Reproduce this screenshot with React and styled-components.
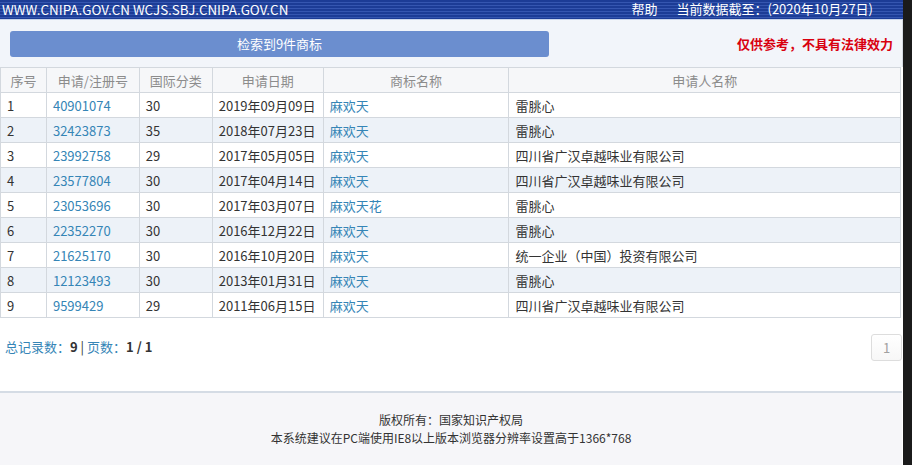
import React from "react";
import styled, { createGlobalStyle } from "styled-components";

const GlobalStyle = createGlobalStyle`
  html, body { margin: 0; padding: 0; background: #1b1b1b; }
  body { font-family: "Noto Sans CJK SC", "Noto Sans", sans-serif; }
  * { box-sizing: border-box; }
`;

const Shell = styled.div`
  display: flex;
  width: 912px;
  height: 465px;
  overflow: hidden;
`;

const Page = styled.div`
  width: 903px;
  height: 465px;
  display: flex;
  flex-direction: column;
  background: #ffffff;
`;

const TopBar = styled.div`
  height: 20px;
  display: flex;
  align-items: flex-start;
  justify-content: space-between;
  padding: 0 30px 0 2px;
  color: #ffffff;
  line-height: 18px;
  background: repeating-linear-gradient(
    to bottom,
    #1c3c96 0px,
    #1c3c96 2px,
    #3556b0 2px,
    #3556b0 3px
  );
  border-bottom: 1px solid #c9d4ea;
`;

const Domain = styled.span`
  font-size: 13.4px;
`;

const TopLinks = styled.div`
  display: flex;
  gap: 19px;
  font-size: 13px;
`;

const SearchPanel = styled.div`
  display: flex;
  align-items: center;
  justify-content: space-between;
  height: 47px;
  padding: 0 9px 0 10px;
  background: #f2f5fa;
  border-right: 1px solid #d6dbe3;
`;

const ResultBar = styled.div`
  width: 539px;
  height: 26px;
  border-radius: 3px;
  background: #6b8ecf;
  color: #ffffff;
  font-size: 13px;
  display: flex;
  align-items: center;
  justify-content: center;
`;

const Notice = styled.div`
  color: #d9000f;
  font-size: 13px;
  font-weight: bold;
`;

const Table = styled.table`
  width: 901px;
  border-collapse: collapse;
  font-size: 13px;
  color: #333333;
`;

const Th = styled.th`
  height: 25px;
  padding: 0;
  border: 1px solid #d3d8de;
  background: #f6f7f9;
  color: #8c8c8c;
  font-weight: normal;
  text-align: center;
  width: ${(p) => p.$w}px;
`;

const Tr = styled.tr`
  background: ${(p) => (p.$alt ? "#edf2f8" : "#ffffff")};
`;

const Td = styled.td`
  height: 25px;
  padding: 0 0 0 6px;
  border: 1px solid #d3d8de;
  color: ${(p) => (p.$link ? "#3585b6" : "#333333")};
  white-space: nowrap;
`;

const Summary = styled.div`
  display: flex;
  justify-content: space-between;
  align-items: flex-start;
  padding: 16px 1px 0 5px;
  height: 73px;
  font-size: 13px;
`;

const Stats = styled.div`
  margin-top: 3px;
  color: #333333;
`;

const Label = styled.span`
  color: #3585b6;
`;

const Num = styled.b`
  color: #333333;
  font-weight: bold;
`;

const PageBtn = styled.div`
  width: 31px;
  height: 27px;
  border: 1px solid #dddddd;
  border-radius: 3px;
  background: linear-gradient(#ffffff, #f7f7f7);
  color: #a0a0a0;
  display: flex;
  align-items: center;
  justify-content: center;
  font-size: 13px;
`;

const Footer = styled.div`
  flex: 1;
  border-top: 2px solid #d5dce5;
  background: #f6f6f9;
  margin-right: 1px;
  display: flex;
  flex-direction: column;
  align-items: center;
  padding-top: 18px;
  font-size: 12px;
  line-height: 18px;
  color: #333333;
`;

const cols = [
  { t: "序号", w: 46 },
  { t: "申请/注册号", w: 93 },
  { t: "国际分类", w: 73 },
  { t: "申请日期", w: 111 },
  { t: "商标名称", w: 186 },
  { t: "申请人名称", w: 392 },
];

const rows = [
  ["1", "40901074", "30", "2019年09月09日", "麻欢天", "雷朓心"],
  ["2", "32423873", "35", "2018年07月23日", "麻欢天", "雷朓心"],
  ["3", "23992758", "29", "2017年05月05日", "麻欢天", "四川省广汉卓越味业有限公司"],
  ["4", "23577804", "30", "2017年04月14日", "麻欢天", "四川省广汉卓越味业有限公司"],
  ["5", "23053696", "30", "2017年03月07日", "麻欢天花", "雷朓心"],
  ["6", "22352270", "30", "2016年12月22日", "麻欢天", "雷朓心"],
  ["7", "21625170", "30", "2016年10月20日", "麻欢天", "统一企业（中国）投资有限公司"],
  ["8", "12123493", "30", "2013年01月31日", "麻欢天", "雷朓心"],
  ["9", "9599429", "29", "2011年06月15日", "麻欢天", "四川省广汉卓越味业有限公司"],
];

export default function App() {
  return (
    <>
      <GlobalStyle />
      <Shell>
        <Page>
          <TopBar>
            <Domain>WWW.CNIPA.GOV.CN WCJS.SBJ.CNIPA.GOV.CN</Domain>
            <TopLinks>
              <span>帮助</span>
              <span>当前数据截至：(2020年10月27日)</span>
            </TopLinks>
          </TopBar>
          <SearchPanel>
            <ResultBar>检索到9件商标</ResultBar>
            <Notice>仅供参考，不具有法律效力</Notice>
          </SearchPanel>
          <Table>
            <thead>
              <tr>
                {cols.map((c) => (
                  <Th key={c.t} $w={c.w}>
                    {c.t}
                  </Th>
                ))}
              </tr>
            </thead>
            <tbody>
              {rows.map((r, i) => (
                <Tr key={r[0]} $alt={i % 2 === 1}>
                  <Td>{r[0]}</Td>
                  <Td $link>{r[1]}</Td>
                  <Td>{r[2]}</Td>
                  <Td>{r[3]}</Td>
                  <Td $link>{r[4]}</Td>
                  <Td>{r[5]}</Td>
                </Tr>
              ))}
            </tbody>
          </Table>
          <Summary>
            <Stats>
              <Label>总记录数：</Label>
              <Num>9</Num> | <Label>页数：</Label>
              <Num>1 / 1</Num>
            </Stats>
            <PageBtn>1</PageBtn>
          </Summary>
          <Footer>
            <div>版权所有：国家知识产权局</div>
            <div>本系统建议在PC端使用IE8以上版本浏览器分辨率设置高于1366*768</div>
          </Footer>
        </Page>
      </Shell>
    </>
  );
}
